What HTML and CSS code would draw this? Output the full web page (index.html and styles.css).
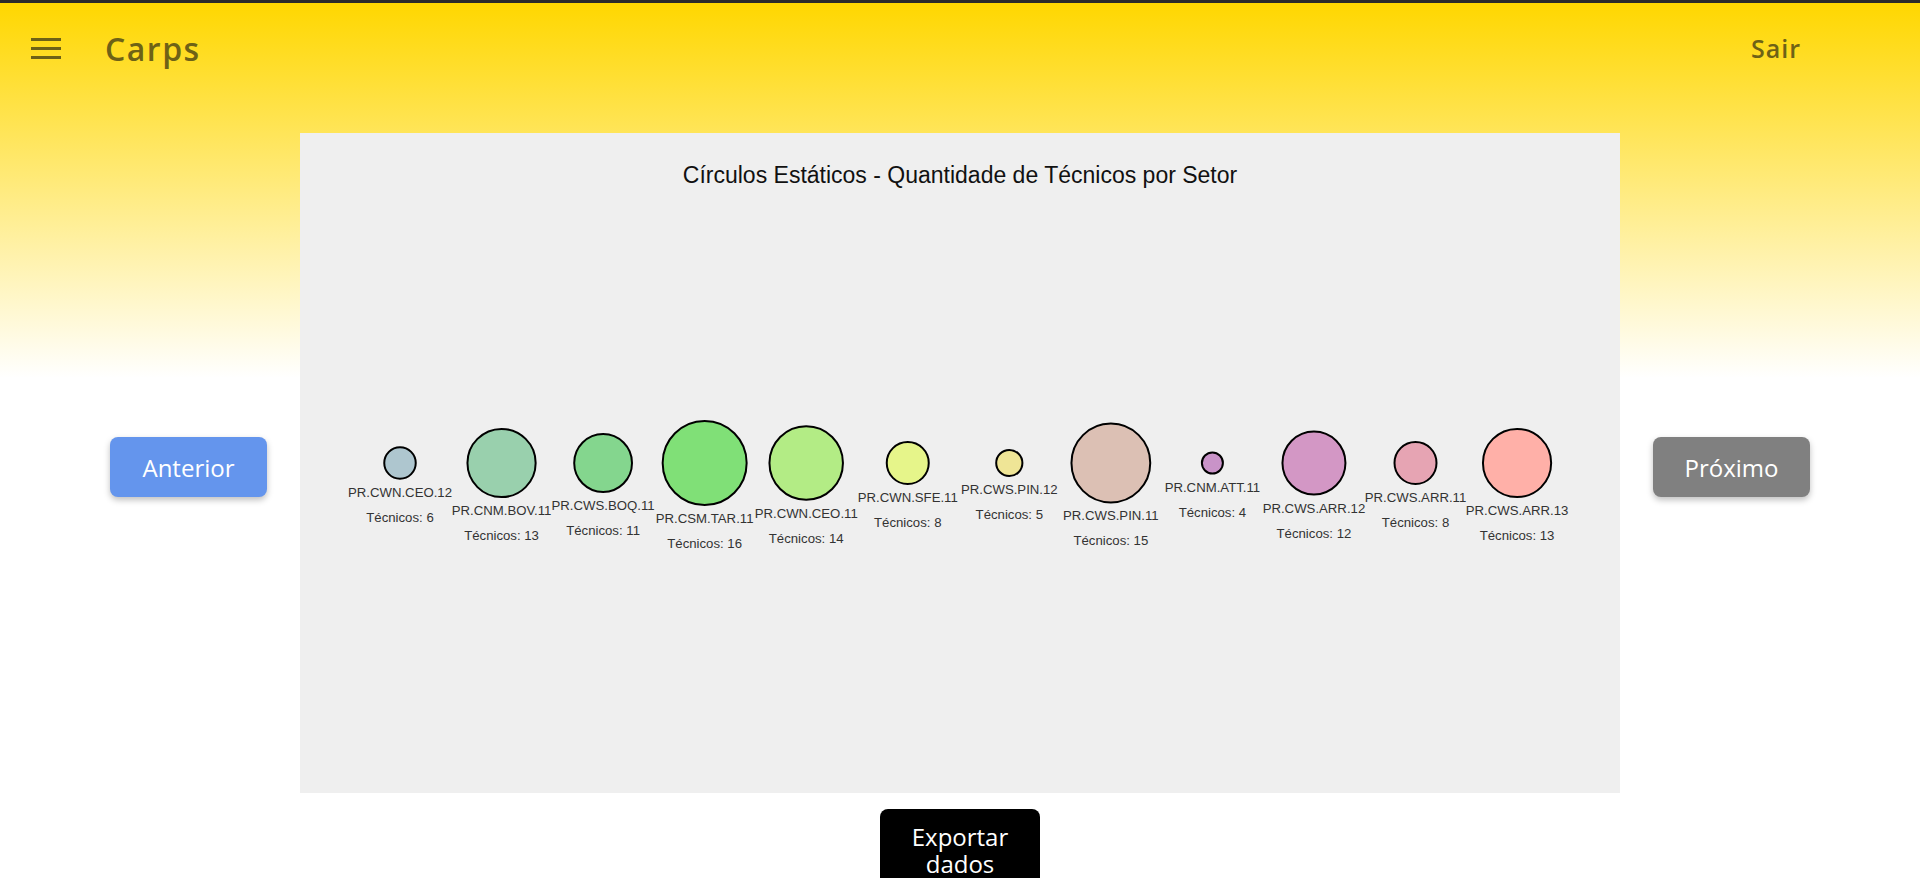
FILE: index.html
```html
<!DOCTYPE html>
<html lang="pt-BR">
<head>
<meta charset="utf-8">
<title>Carps</title>
<link rel="stylesheet" href="styles.css">
</head>
<body>
<div class="topstrip"></div>
<header class="toolbar">
  <div class="brand">
    <button class="menu-btn" aria-label="menu">
      <svg width="30" height="21" viewBox="0 0 30 21"><rect x="0" y="0" width="30" height="3"/><rect x="0" y="9" width="30" height="3"/><rect x="0" y="18" width="30" height="3"/></svg>
    </button>
    <span class="app-title">Carps</span>
  </div>
  <a class="logout">Sair</a>
</header>
<main class="content">
  <div class="carousel">
    <button class="nav-btn prev">Anterior</button>
    <div class="chart-card">
      <svg class="chart" width="1320" height="660" viewBox="0 0 1320 660">
        <text class="chart-title" x="660" y="50">Círculos Estáticos - Quantidade de Técnicos por Setor</text>
        <g class="node"><circle cx="100" cy="330" r="15.75" fill="#aec6cf"/><text x="100" y="363.75">PR.CWN.CEO.12</text><text x="100" y="388.75">Técnicos: 6</text></g>
        <g class="node"><circle cx="201.55" cy="330" r="34.1" fill="#99d0ad"/><text x="201.55" y="382.1">PR.CNM.BOV.11</text><text x="201.55" y="407.1">Técnicos: 13</text></g>
        <g class="node"><circle cx="303.1" cy="330" r="28.9" fill="#84d68e"/><text x="303.1" y="376.9">PR.CWS.BOQ.11</text><text x="303.1" y="401.9">Técnicos: 11</text></g>
        <g class="node"><circle cx="404.65" cy="330" r="42" fill="#80e077"/><text x="404.65" y="390">PR.CSM.TAR.11</text><text x="404.65" y="415">Técnicos: 16</text></g>
        <g class="node"><circle cx="506.2" cy="330" r="36.75" fill="#b3ec85"/><text x="506.2" y="384.75">PR.CWN.CEO.11</text><text x="506.2" y="409.75">Técnicos: 14</text></g>
        <g class="node"><circle cx="607.75" cy="330" r="21" fill="#e6f58a"/><text x="607.75" y="369">PR.CWN.SFE.11</text><text x="607.75" y="394">Técnicos: 8</text></g>
        <g class="node"><circle cx="709.3" cy="330" r="13.1" fill="#efe596"/><text x="709.3" y="361.1">PR.CWS.PIN.12</text><text x="709.3" y="386.1">Técnicos: 5</text></g>
        <g class="node"><circle cx="810.85" cy="330" r="39.4" fill="#dcc0b4"/><text x="810.85" y="387.4">PR.CWS.PIN.11</text><text x="810.85" y="412.4">Técnicos: 15</text></g>
        <g class="node"><circle cx="912.4" cy="330" r="10.5" fill="#c993c8"/><text x="912.4" y="358.5">PR.CNM.ATT.11</text><text x="912.4" y="383.5">Técnicos: 4</text></g>
        <g class="node"><circle cx="1013.95" cy="330" r="31.5" fill="#d397c5"/><text x="1013.95" y="379.5">PR.CWS.ARR.12</text><text x="1013.95" y="404.5">Técnicos: 12</text></g>
        <g class="node"><circle cx="1115.5" cy="330" r="21" fill="#e6a4b3"/><text x="1115.5" y="369">PR.CWS.ARR.11</text><text x="1115.5" y="394">Técnicos: 8</text></g>
        <g class="node"><circle cx="1217.05" cy="330" r="34.1" fill="#ffb0a8"/><text x="1217.05" y="382.1">PR.CWS.ARR.13</text><text x="1217.05" y="407.1">Técnicos: 13</text></g>
      </svg>
    </div>
    <button class="nav-btn next">Próximo</button>
  </div>
  <button class="export-btn">Exportar dados</button>
</main>
</body>
</html>
```

FILE: styles.css
```css
html {
  overflow: hidden;
}

body {
  margin: 0;
  min-height: 878px;
  background: linear-gradient(180deg, #2d2d2d 0, #2d2d2d 3px, #ffd700 3px, #ffffff 378px) no-repeat;
  background-color: #ffffff;
  font-family: "Open Sans", "DejaVu Sans", sans-serif;
}

.topstrip {
  height: 3px;
  background: #2b2b2b;
}

.toolbar {
  height: 91px;
  display: flex;
  align-items: center;
  justify-content: space-between;
  padding: 0 119px 0 31px;
  color: #6e6216;
}

.brand {
  display: flex;
  align-items: center;
  gap: 44px;
}

.menu-btn {
  display: flex;
  padding: 0;
  margin: 0;
  border: 0;
  background: transparent;
  fill: #6e6216;
  cursor: pointer;
}

.app-title {
  font-size: 32px;
  font-weight: 600;
  letter-spacing: 1.5px;
  line-height: 1;
}

.logout {
  font-size: 25px;
  font-weight: 600;
  letter-spacing: 1px;
  line-height: 1;
  cursor: pointer;
}

.content {
  padding-top: 39px;
  display: flex;
  flex-direction: column;
  align-items: center;
  gap: 16px;
}

.carousel {
  display: flex;
  align-items: center;
  justify-content: center;
  gap: 33px;
}

.nav-btn {
  width: 157px;
  height: 60px;
  margin-top: 8px;
  border: 0;
  border-radius: 8px;
  color: #ffffff;
  font-family: "Open Sans", "DejaVu Sans", sans-serif;
  font-size: 24px;
  box-shadow: 0 3px 6px rgba(0, 0, 0, 0.25);
  cursor: pointer;
}

.prev {
  background: #6495ed;
}

.next {
  background: #808080;
}

.chart-card {
  width: 1320px;
  height: 660px;
  background: #efefef;
}

.chart {
  display: block;
}

.chart-title {
  font-family: "Liberation Sans", Arial, sans-serif;
  font-size: 23px;
  fill: #111111;
  text-anchor: middle;
}

.node circle {
  stroke: #000000;
  stroke-width: 2;
}

.node text {
  font-family: "Liberation Sans", Arial, sans-serif;
  font-size: 13.2px;
  fill: #333333;
  text-anchor: middle;
}

.export-btn {
  width: 160px;
  padding: 14px 16px;
  border: 0;
  border-radius: 8px;
  background: #000000;
  color: #ffffff;
  font-family: "Open Sans", "DejaVu Sans", sans-serif;
  font-size: 24px;
  line-height: 27px;
  cursor: pointer;
}
```
